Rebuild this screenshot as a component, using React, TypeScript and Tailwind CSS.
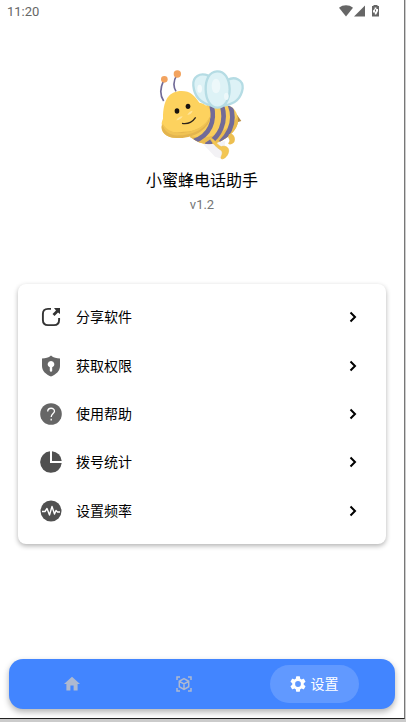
import React from "react";

function Bee() {
  return (
    <svg viewBox="54 36 264 288" className="h-24 w-[88px]" role="img" aria-label="小蜜蜂">
      <defs>
        <clipPath id="bee-body">
          <path d="M150 246 C175 265 200 272 226 265 C262 254 297 222 294 193 C291 171 282 158 268 153 L200 150 Z" />
        </clipPath>
      </defs>
      <path d="M190 268 L225 305 L248 312 L256 258 Z" fill="#f3f2f5" />
      <path d="M288 175 L304 198 L292 202 Z" fill="#b88c45" />
      <g clipPath="url(#bee-body)">
        <path d="M140 140H310V290H140Z" fill="#f8cd5c" />
        <path d="M140 238 C190 262 260 240 296 180 V290 H140Z" fill="#e9bb50" />
        <g fill="none" stroke="#716b98" strokeWidth="14">
          <path d="M215 152 C226 198 210 242 162 258" />
          <path d="M246 152 C261 202 240 246 198 270" />
          <path d="M270 150 C286 192 276 228 242 262" />
        </g>
      </g>
      <g stroke="#b5dce4" strokeWidth="7" fill="#ddf2f6">
        <path d="M205 62 C180 52 157 64 160 92 C163 125 184 145 215 152 Z" />
        <path d="M262 75 C285 62 310 75 308 100 C304 128 286 146 255 151 Z" />
        <path d="M231 49 C208 50 196 74 197 104 C198 134 211 158 232 158 C254 158 269 134 269 103 C268 70 254 48 231 49 Z" />
      </g>
      <ellipse cx="228" cy="93" rx="13" ry="22" fill="#edf8fa" />
      <ellipse cx="259" cy="124" rx="7" ry="11" fill="#edf8fa" />
      <ellipse cx="179" cy="101" rx="7" ry="12" fill="#f4fbfc" />
      <path d="M207 247 C225 250 229 271 244 275 C257 270 270 279 265 293 C262 305 249 314 244 311 C240 306 251 297 245 287 C230 278 218 266 207 247 Z" fill="#f3c653" stroke="#eabd4d" strokeWidth="2" />
      <path d="M267 238 C278 231 289 248 283 261 C277 270 263 270 265 264 C271 258 268 253 264 246 Z" fill="#edbf50" />
      <path d="M71 138 C58 119 62 95 71 76 M108 109 C98 93 102 74 111 59" fill="none" stroke="#716b98" strokeWidth="5" />
      <circle cx="73" cy="73" r="10" fill="#f2a35f" />
      <circle cx="112" cy="57" r="11" fill="#f2a35f" />
      <path d="M69 191 C69 135 86 108 125 108 C151 108 164 122 178 143 C202 146 219 169 207 195 C196 225 151 251 107 248 C78 249 60 229 66 210 C63 205 67 197 69 191 Z" fill="#fdd25e" />
      <path d="M66 208 C78 234 108 235 130 230 C165 231 197 217 211 183 C210 220 162 252 112 249 C81 250 59 232 66 208 Z" fill="#e3b44e" />
      <path d="M68 205 C80 230 110 238 138 232 C174 225 198 209 209 185 C205 214 166 239 120 241 C91 244 69 229 68 205 Z" fill="#f0c354" />
      <path d="M109 196 Q115 185 128 184 Q122 195 109 196 Z M142 180 Q146 169 158 167 Q154 178 142 180 Z" fill="#ffe49a" />
      <ellipse cx="111" cy="168" rx="7" ry="8" fill="#18120e" />
      <ellipse cx="144" cy="154" rx="7" ry="8" fill="#18120e" />
      <path d="M126 205 C142 208 158 200 167 187" fill="none" stroke="#2e241b" strokeWidth="4" />
    </svg>
  );
}

function ShareIcon() {
  return (
    <svg viewBox="0 0 22 22" className="size-[22px]" aria-hidden="true">
      <path d="M11 2.900H8Q2.900 2.900 2.900 8v6Q2.900 19.100 8 19.100h6Q19.100 19.100 19.100 14V12" fill="none" stroke="#343434" strokeWidth="1.900" />
      <path d="M14 2H20V8L18 6.500L14.500 10L12.500 8L16 4.500Z" fill="#343434" />
    </svg>
  );
}

function ShieldIcon() {
  return (
    <svg viewBox="0 0 22 22" className="size-[22px]" aria-hidden="true">
      <path d="M11 0.500C8.500 2.700 5.500 3.500 2 3.500V11C2 16 6 19.500 11 21.500C16 19.500 20 16 20 11V3.500C16.500 3.500 13.500 2.700 11 0.500Z" fill="#666" />
      <path d="M11 6A3.200 3.200 0 0 0 9.800 12.200V16L11 17L12.200 16V12.200A3.200 3.200 0 0 0 11 6Z" fill="#fff" />
    </svg>
  );
}

function HelpIcon() {
  return (
    <svg viewBox="0 0 22 22" className="size-[22px]" aria-hidden="true">
      <circle cx="11" cy="11" r="10.800" fill="#666" />
      <path d="M7.700 8.500C7.700 4.200 14.500 4.200 14.500 8.200C14.500 10.500 11.200 10.700 11.200 14M11.200 15.800V17.500" fill="none" stroke="#fff" strokeWidth="1.300" />
    </svg>
  );
}

function PieIcon() {
  return (
    <svg viewBox="0 0 22 22" className="size-[22px]" aria-hidden="true">
      <path d="M10 0.300A10.800 10.800 0 1 0 21.700 12H10Z" fill="#505050" />
      <path d="M12 0.300A10.500 10.500 0 0 1 21.700 10H12Z" fill="#505050" />
    </svg>
  );
}

function PulseIcon() {
  return (
    <svg viewBox="0 0 22 22" className="size-[22px]" aria-hidden="true">
      <circle cx="11" cy="11" r="10.500" fill="#505050" />
      <path d="M2 11.500H5L7 8.500L9.500 15L12 6.500L14.500 14L16 10.500L17.500 12H20" fill="none" stroke="#fff" strokeWidth="1.400" strokeLinejoin="round" />
    </svg>
  );
}

const items = [
  { label: "分享软件", Icon: ShareIcon },
  { label: "获取权限", Icon: ShieldIcon },
  { label: "使用帮助", Icon: HelpIcon },
  { label: "拨号统计", Icon: PieIcon },
  { label: "设置频率", Icon: PulseIcon },
];

function StatusBar() {
  return (
    <header className="flex h-6 items-center justify-between pl-[7px] pr-6 text-[#666]">
      <time className="text-[13px] leading-4">11:20</time>
      <svg viewBox="0 0 42 14" className="h-[14px] w-[42px]" fill="#666" aria-hidden="true">
        <path d="M1 2.800C5 -0.500 11 -0.500 15 2.800L8 11.500Z" />
        <path d="M27 0.500V11.500H16Z" />
        <path d="M34 1H35.500V-0.500H39.500V1H41V11.500H34Z" />
        <path d="M36.600 2.500H38.400V4H40V6L38.200 9.500H36.800V7.500H35V5.500L36.600 4Z" fill="#fff" />
        <path d="M37 4.500H38V6.500H37Z" />
      </svg>
    </header>
  );
}

function NavBar() {
  return (
    <nav className="mx-[9px] mb-[9px] mt-auto grid h-[50px] grid-cols-[125fr_99fr_162fr] place-items-center rounded-[14px] bg-[#4285ff] shadow-[0_3px_6px_rgba(0,0,0,0.3)]">
      <button aria-label="首页" className="flex size-10 items-center justify-center">
        <svg viewBox="2 2 20 20" className="size-4" aria-hidden="true">
          <path d="M10 20v-6h4v6h5v-8h3L12 3 2 12h3v8z" fill="#aeb9d0" />
        </svg>
      </button>
      <button aria-label="拨号" className="flex size-10 items-center justify-center">
        <svg viewBox="0 0 16 16" className="size-4" fill="none" stroke="#aeb9d0" strokeWidth="1.500" aria-hidden="true">
          <path d="M1 4V1H4M12 1H15V4M15 12V15H12M4 15H1V12" />
          <path d="M8 2.700L12.700 5.300V10.700L8 13.300L3.300 10.700V5.300ZM3.300 5.300L8 8L12.700 5.300M8 8V13.300" />
        </svg>
      </button>
      <button aria-current="page" className="flex h-[38px] items-center gap-[5px] rounded-full bg-[#6199ff] px-5 text-sm text-white">
        <svg viewBox="2 2 20 20" className="size-4" aria-hidden="true">
          <path fill="#fff" d="M19.140 12.940c.04-.3.060-.61.060-.94s-.02-.64-.07-.94l2.030-1.580a.49.49 0 0 0 .12-.61l-1.920-3.320a.49.49 0 0 0-.59-.22l-2.390.96c-.5-.38-1.030-.7-1.620-.94l-.36-2.540a.48.48 0 0 0-.48-.41h-3.840a.48.48 0 0 0-.47.41l-.36 2.540c-.59.24-1.130.57-1.620.94l-2.390-.96a.49.49 0 0 0-.59.22L2.740 8.870a.48.48 0 0 0 .12.61l2.030 1.580c-.05.3-.09.63-.09.94s.02.64.07.94l-2.030 1.580a.49.49 0 0 0-.12.61l1.920 3.320c.12.22.37.29.59.22l2.390-.96c.5.38 1.030.7 1.620.94l.36 2.540c.05.24.24.41.48.41h3.840c.24 0 .44-.17.47-.41l.36-2.540c.59-.24 1.130-.56 1.620-.94l2.390.96c.22.08.47 0 .59-.22l1.920-3.320a.48.48 0 0 0-.12-.61zM12 15.600A3.600 3.600 0 1 1 12 8.400a3.600 3.600 0 0 1 0 7.200z" />
        </svg>
        设置
      </button>
    </nav>
  );
}

export default function App() {
  return (
    <div className="flex min-h-screen flex-col bg-[#cbcbcb] pb-[3px] pr-px font-[Roboto,'Noto_Sans_CJK_SC',sans-serif]">
      <div className="flex flex-1 flex-col border-b border-r border-b-[#222] border-r-[#777] bg-white">
        <StatusBar />
        <section className="mt-[43px] flex flex-col items-center">
          <Bee />
          <h1 className="mt-[6px] text-base leading-6 text-black">小蜜蜂电话助手</h1>
          <p className="mt-1 text-[13px] leading-4 text-[#757575]">v1.2</p>
        </section>
        <ul className="mx-[18px] mb-6 mt-[71px] grid h-[260px] grid-rows-5 rounded-lg bg-white py-[9px] shadow-[0_2px_5px_rgba(0,0,0,0.3)]">
          {items.map(({ label, Icon }) => (
            <li key={label} className="flex">
              <button className="flex flex-1 items-center gap-[14px] pl-[22px] pr-[29px] text-left text-sm text-black">
                <Icon />
                <span className="flex-1">{label}</span>
                <svg viewBox="0 0 8 12" className="h-3 w-2" fill="none" stroke="#000" strokeWidth="2" aria-hidden="true">
                  <path d="M1.500 1.500L6 6L1.500 10.500" />
                </svg>
              </button>
            </li>
          ))}
        </ul>
        <NavBar />
      </div>
    </div>
  );
}
